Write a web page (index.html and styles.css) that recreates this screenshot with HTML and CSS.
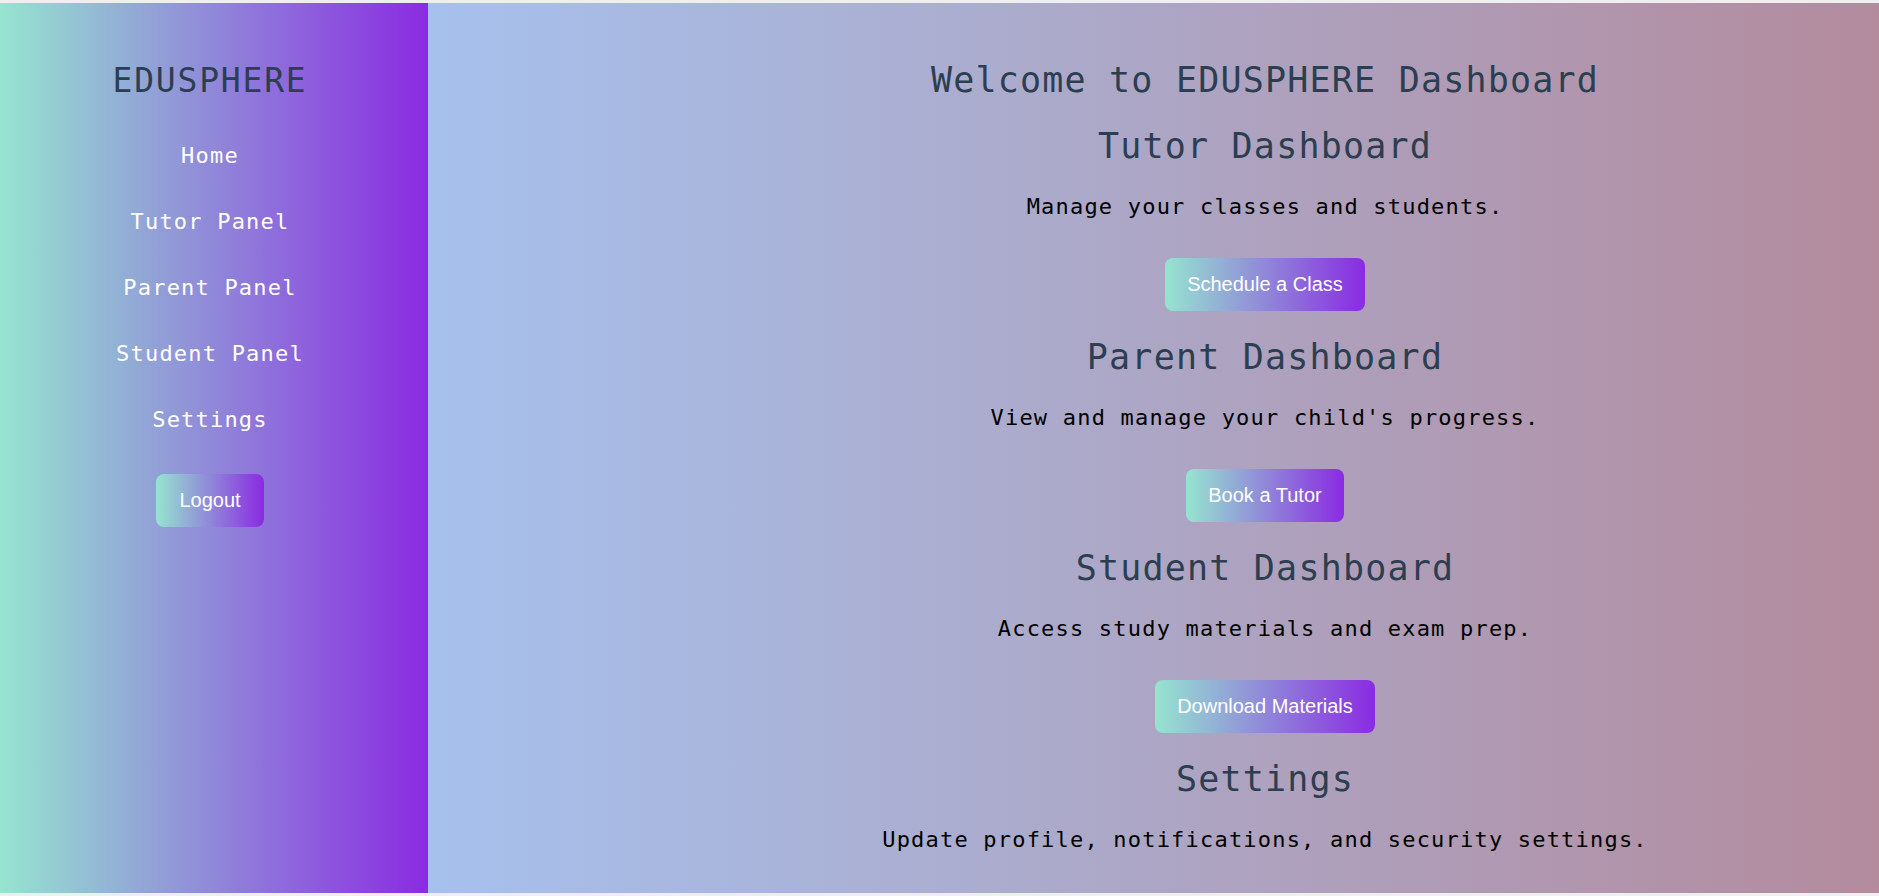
FILE: index.html
```html
<!DOCTYPE html>
<html lang="en">
<head>
<meta charset="UTF-8">
<title>EDUSPHERE Dashboard</title>
<link rel="stylesheet" href="styles.css">
</head>
<body>
<div class="layout">
  <aside class="sidebar">
    <h2 class="brand">EDUSPHERE</h2>
    <nav class="nav">
      <a class="nav-link" href="#">Home</a>
      <a class="nav-link" href="#">Tutor Panel</a>
      <a class="nav-link" href="#">Parent Panel</a>
      <a class="nav-link" href="#">Student Panel</a>
      <a class="nav-link" href="#">Settings</a>
    </nav>
    <button class="btn">Logout</button>
  </aside>
  <main class="main">
    <h1 class="title">Welcome to EDUSPHERE Dashboard</h1>
    <section class="section">
      <h2 class="section-title">Tutor Dashboard</h2>
      <p class="section-text">Manage your classes and students.</p>
      <button class="btn">Schedule a Class</button>
    </section>
    <section class="section">
      <h2 class="section-title">Parent Dashboard</h2>
      <p class="section-text">View and manage your child's progress.</p>
      <button class="btn">Book a Tutor</button>
    </section>
    <section class="section">
      <h2 class="section-title">Student Dashboard</h2>
      <p class="section-text">Access study materials and exam prep.</p>
      <button class="btn">Download Materials</button>
    </section>
    <section class="section">
      <h2 class="section-title">Settings</h2>
      <p class="section-text">Update profile, notifications, and security settings.</p>
    </section>
  </main>
</div>
</body>
</html>
```

FILE: styles.css
```css
* {
  box-sizing: border-box;
}

html, body {
  margin: 0;
  height: 100%;
}

body {
  background: #efefef;
  padding: 3px 0;
  font-family: "DejaVu Sans Mono", monospace;
  overflow: hidden;
}

.layout {
  display: flex;
  height: 890px;
}

.sidebar {
  width: 428px;
  flex: 0 0 428px;
  background: linear-gradient(to right, #96e4d0, #8a2be2);
  display: flex;
  flex-direction: column;
  align-items: center;
  padding-top: 58px;
  padding-right: 8px;
}

.brand {
  margin: 0;
  font-family: "DejaVu Sans Mono", monospace;
  font-weight: normal;
  font-size: 33px;
  letter-spacing: 1.8px;
  line-height: 40px;
  color: #2c3e50;
}

.nav {
  display: flex;
  flex-direction: column;
  align-items: center;
  margin-top: 22px;
}

.nav-link {
  display: block;
  padding: 20px 0;
  font-size: 22px;
  letter-spacing: 1.2px;
  line-height: 26px;
  color: #ffffff;
  text-decoration: none;
}

.btn {
  border: none;
  border-radius: 8px;
  padding: 15px 22px;
  font-family: "Liberation Sans", Arial, sans-serif;
  font-size: 20px;
  line-height: 23px;
  color: #ffffff;
  background: linear-gradient(to right, #96e4d0, #8a2be2);
  cursor: pointer;
}

.sidebar .btn {
  margin-top: 21px;
  padding: 15px 23px;
}

.main {
  flex: 1;
  background: linear-gradient(to right, #a6c1ed, #b38b9d);
  display: flex;
  flex-direction: column;
  align-items: center;
  padding-top: 56px;
  padding-left: 223px;
  text-align: center;
}

.title,
.section-title {
  margin: 0;
  font-family: "DejaVu Sans Mono", monospace;
  font-weight: normal;
  font-size: 35px;
  letter-spacing: 1.2px;
  line-height: 42px;
  color: #2c3e50;
}

.title {
  margin-bottom: 24px;
}

.section {
  display: flex;
  flex-direction: column;
  align-items: center;
}

.section + .section {
  margin-top: 25px;
}

.section-text {
  margin: 26px 0 37px;
  font-size: 22px;
  letter-spacing: 1.2px;
  line-height: 28px;
  color: #000000;
}
```
